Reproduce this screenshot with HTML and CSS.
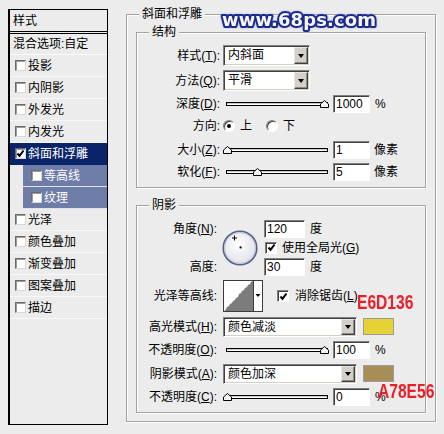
FILE: index.html
```html
<!DOCTYPE html>
<html lang="zh-CN">
<head>
<meta charset="utf-8">
<title>图层样式 - 斜面和浮雕</title>
<link rel="stylesheet" href="styles.css">
</head>
<body>
<div class="dialog">
  <div class="styles">
    <div class="st-head">样式</div>
    <div class="st-blend">混合选项:自定</div>
    <div class="st-item"><span class="cb"></span>投影</div>
    <div class="st-item"><span class="cb"></span>内阴影</div>
    <div class="st-item"><span class="cb"></span>外发光</div>
    <div class="st-item"><span class="cb"></span>内发光</div>
    <div class="st-item sel"><span class="cb"><svg class="tick" viewBox="0 0 9 9"><path d="M1.5 4.5 L3.5 6.8 L7.5 1.5"/></svg></span>斜面和浮雕</div>
    <div class="st-item sub"><span class="cb"></span>等高线</div>
    <div class="st-item sub"><span class="cb"></span>纹理</div>
    <div class="st-item"><span class="cb"></span>光泽</div>
    <div class="st-item"><span class="cb"></span>颜色叠加</div>
    <div class="st-item"><span class="cb"></span>渐变叠加</div>
    <div class="st-item"><span class="cb"></span>图案叠加</div>
    <div class="st-item"><span class="cb"></span>描边</div>
  </div>

  <fieldset class="grp outer">
    <legend>斜面和浮雕</legend>

    <fieldset class="grp inner">
      <legend>结构</legend>
      <div class="form struct">
        <span class="lbl">样式(<u>T</u>):</span>
        <div class="ctl"><div class="select s-struct"><span class="val">内斜面</span><span class="btn"></span></div></div>

        <span class="lbl">方法(<u>Q</u>):</span>
        <div class="ctl"><div class="select s-struct"><span class="val">平滑</span><span class="btn"></span></div></div>

        <span class="lbl">深度(<u>D</u>):</span>
        <div class="ctl">
          <div class="slider"><span class="track"></span><svg class="thumb" style="left:97px" viewBox="0 0 9 8"><polygon points="0.5,7.5 0.5,4 4.5,0.5 8.5,4 8.5,7.5"/></svg></div>
          <span class="num">1000</span><span class="unit">%</span>
        </div>

        <span class="lbl">方向:</span>
        <div class="ctl"><span class="radio on"></span><span class="rtext">上</span><span class="radio"></span><span class="rtext">下</span></div>

        <span class="lbl">大小(<u>Z</u>):</span>
        <div class="ctl">
          <div class="slider"><span class="track"></span><svg class="thumb" style="left:0px" viewBox="0 0 9 8"><polygon points="0.5,7.5 0.5,4 4.5,0.5 8.5,4 8.5,7.5"/></svg></div>
          <span class="num">1</span><span class="unit px">像素</span>
        </div>

        <span class="lbl">软化(<u>F</u>):</span>
        <div class="ctl">
          <div class="slider"><span class="track"></span><svg class="thumb" style="left:30px" viewBox="0 0 9 8"><polygon points="0.5,7.5 0.5,4 4.5,0.5 8.5,4 8.5,7.5"/></svg></div>
          <span class="num">5</span><span class="unit px">像素</span>
        </div>
      </div>
    </fieldset>

    <fieldset class="grp inner shade">
      <legend>阴影</legend>
      <div class="form shadow">
        <span class="lbl r1">角度(<u>N</u>):</span>
        <svg class="dial" viewBox="0 0 36 36">
          <defs>
            <radialGradient id="dialfill" cx="45%" cy="40%" r="65%">
              <stop offset="0" stop-color="#ffffff"/>
              <stop offset="1" stop-color="#dedee6"/>
            </radialGradient>
          </defs>
          <circle cx="18" cy="18" r="16.8" fill="url(#dialfill)" stroke="#56628a" stroke-width="1.6"/>
          <circle cx="18" cy="18" r="15.4" fill="none" stroke="#b4bacc" stroke-width="0.8"/>
          <path d="M12.5 5.5v5M10 8h5" stroke="#000" stroke-width="1"/>
          <rect x="17.6" y="16.4" width="2" height="2" fill="#000"/>
        </svg>
        <div class="c3 r1"><span class="num w41">120</span><span class="unit">度</span></div>
        <div class="c3 r2"><span class="check"><svg class="tick" viewBox="0 0 9 9"><path d="M1.5 4.5 L3.5 6.8 L7.5 1.5"/></svg></span><span class="ctext">使用全局光(<u>G</u>)</span></div>
        <span class="lbl r3">高度:</span>
        <div class="c3 r3"><span class="num w41">30</span><span class="unit">度</span></div>

        <span class="lbl r4">光泽等高线:</span>
        <div class="ctl r4">
          <svg class="contour" viewBox="0 0 40 32">
            <rect x="0.5" y="0.5" width="39" height="31" fill="#fff" stroke="#3c3c3c"/>
            <polygon points="1.5,31 3,29 4,27 6,26 7,24 9,23 10,21 12,20 13,18 15,17 16,14 18,13 19,11 21,10 22,8 24,7 25,5 27,4 28,2 30,1 30,31" fill="#7c7c7c"/>
            <line x1="30.5" y1="1" x2="30.5" y2="31" stroke="#3c3c3c"/>
            <polygon points="32.5,14 37.5,14 35,17" fill="#000"/>
          </svg>
          <span class="check gap"><svg class="tick" viewBox="0 0 9 9"><path d="M1.5 4.5 L3.5 6.8 L7.5 1.5"/></svg></span><span class="ctext wide">消除锯齿(<u>L</u>)</span>
        </div>

        <span class="lbl r5">高光模式(<u>H</u>):</span>
        <div class="ctl r5"><div class="select s-mode"><span class="val">颜色减淡</span><span class="btn"></span></div><span class="swatch sw-hi"></span></div>

        <span class="lbl r6">不透明度(<u>O</u>):</span>
        <div class="ctl r6">
          <div class="slider"><span class="track"></span><svg class="thumb" style="left:97px" viewBox="0 0 9 8"><polygon points="0.5,7.5 0.5,4 4.5,0.5 8.5,4 8.5,7.5"/></svg></div>
          <span class="num">100</span><span class="unit">%</span>
        </div>

        <span class="lbl r7">阴影模式(<u>A</u>):</span>
        <div class="ctl r7"><div class="select s-mode"><span class="val">颜色加深</span><span class="btn"></span></div><span class="swatch sw-sh"></span></div>

        <span class="lbl r8">不透明度(<u>C</u>):</span>
        <div class="ctl r8">
          <div class="slider"><span class="track"></span><svg class="thumb" style="left:0px" viewBox="0 0 9 8"><polygon points="0.5,7.5 0.5,4 4.5,0.5 8.5,4 8.5,7.5"/></svg></div>
          <span class="num">0</span><span class="unit">%</span>
        </div>
      </div>
    </fieldset>
  </fieldset>
</div>

<svg class="wm" viewBox="0 0 166 32">
  <text x="5" y="22" textLength="154" lengthAdjust="spacing">www.68ps.com</text>
</svg>
<div class="note n1">E6D136</div>
<div class="note n2">A78E56</div>
</body>
</html>
```

FILE: styles.css
```css
* { box-sizing: border-box; }
html, body { margin: 0; padding: 0; }
body {
  width: 444px;
  height: 434px;
  overflow: hidden;
  position: relative;
  background: #ececec;
  color: #000;
  font-family: "Liberation Sans", "Noto Sans CJK SC", sans-serif;
  font-size: 12px;
  line-height: 16px;
}
u { text-decoration: underline; text-underline-offset: 1px; }

.dialog {
  display: flex;
  align-items: flex-start;
  padding: 6px 0 0 8px;
}

/* ---------- style list ---------- */
.styles {
  width: 100px;
  height: 416px;
  margin-top: 3px;
  flex: none;
  border: 1px solid #000;
  border-left-width: 2px;
  background: #ececec;
}
.st-head {
  height: 24px;
  padding: 3px 0 0 3px;
  border-bottom: 3px double #000;
}
.st-blend {
  height: 21px;
  line-height: 20px;
  padding-left: 3px;
  border-bottom: 1px solid #fbfbfb;
}
.st-item {
  height: 22px;
  display: flex;
  align-items: center;
  padding-left: 5px;
  border-bottom: 1px solid #f8f8f8;
  white-space: nowrap;
}
.cb {
  width: 11px;
  height: 11px;
  flex: none;
  margin-right: 2px;
  background: #fff;
  border: 1px solid;
  border-color: #6a6a6a #d8d8d8 #d8d8d8 #6a6a6a;
  box-shadow: inset 1px 1px 0 #9a9a9a;
  display: flex;
  align-items: center;
  justify-content: center;
}
.sel { background: #0a246a; color: #fff; border-bottom-color: #0a246a; }
.sub {
  margin-left: 13px;
  padding-left: 8px;
  background: #6e7ca8;
  color: #fff;
  border-bottom-color: #dfe2ee;
}
.tick { width: 9px; height: 9px; display: block; }
.tick path { fill: none; stroke: #000; stroke-width: 2; }

/* ---------- group boxes ---------- */
.grp {
  margin: 0;
  padding: 0;
  min-width: 0;
  border: 1px solid #a2a2a2;
  box-shadow: inset 1px 1px 0 #fff, 1px 1px 0 #fff;
}
.grp > legend {
  padding: 0 3px;
  height: 16px;
  line-height: 16px;
  background: #ececec;
}
.outer {
  width: 310px;
  margin-left: 18px;
  padding: 2px 9px 8px 9px;
}
.outer > legend { margin-left: 3px; }
.inner {
  width: 290px;
  padding: 4px 0 5px 0;
}
.inner > legend { margin-left: 12px; }
.shade {
  margin-top: 9px;
  padding: 6px 0 5px 0;
}

/* ---------- form grids ---------- */
.form {
  display: grid;
  grid-template-columns: 86px 41px 1fr;
}
.struct { grid-template-rows: 23px 27px 20px 24px 24px 20px; }
.shadow { grid-template-rows: 19px 19px 20px 38px 23px 23px 25px 21px; }
.lbl {
  grid-column: 1;
  align-self: center;
  text-align: right;
  padding-right: 3px;
  white-space: nowrap;
}
.shadow .lbl { padding-right: 6px; }
.ctl {
  grid-column: 2 / -1;
  display: flex;
  align-items: center;
  white-space: nowrap;
}
.c3 {
  grid-column: 3;
  display: flex;
  align-items: center;
  white-space: nowrap;
}
.r1 { grid-row: 1; }
.r2 { grid-row: 2; }
.r3 { grid-row: 3; }
.r4 { grid-row: 4; }
.r5 { grid-row: 5; }
.r6 { grid-row: 6; }
.r7 { grid-row: 7; }
.r8 { grid-row: 8; }

/* ---------- controls ---------- */
.select {
  display: flex;
  height: 21px;
  padding: 1px;
  background: #fff;
  border: 1px solid;
  border-color: #808080 #fff #fff #808080;
  box-shadow: inset 1px 1px 0 #404040, inset -1px -1px 0 #d4d0c8;
}
.s-struct { width: 87px; }
.s-mode { width: 134px; height: 20px; }
.select .val {
  flex: 1;
  padding-left: 3px;
  line-height: 17px;
}
.s-mode .val { line-height: 16px; }
.select .btn {
  width: 14px;
  flex: none;
  display: flex;
  align-items: center;
  justify-content: center;
  background: #d4d0c8;
  border: 1px solid;
  border-color: #e6e6e6 #404040 #404040 #e6e6e6;
  box-shadow: inset -1px -1px 0 #8a8a8a;
}
.select .btn::after {
  content: "";
  border-left: 3px solid transparent;
  border-right: 3px solid transparent;
  border-top: 4px solid #000;
}

.slider {
  position: relative;
  width: 106px;
  height: 10px;
  flex: none;
}
.track {
  display: block;
  height: 4px;
  margin: 3px 1px 0 3px;
  background: #fff;
  border: 1px solid #000;
  box-shadow: inset 0 1px 0 #c8c8c8;
}
.thumb {
  position: absolute;
  top: 1px;
  width: 9px;
  height: 8px;
}
.thumb polygon { fill: #f4f4f4; stroke: #000; stroke-width: 1; }

.num {
  width: 37px;
  height: 18px;
  flex: none;
  margin-left: 4px;
  padding-left: 2px;
  line-height: 16px;
  background: #fff;
  border: 1px solid;
  border-color: #808080 #fff #fff #808080;
  box-shadow: inset 1px 1px 0 #404040;
}
.num.w41 { width: 41px; margin-left: 0; }
.unit { margin-left: 5px; }
.unit.px { margin-left: 4px; }

.radio {
  position: relative;
  width: 12px;
  height: 12px;
  flex: none;
  border-radius: 50%;
  background: #fff;
  border: 1px solid;
  border-color: #808080 #fff #fff #808080;
  box-shadow: inset 1px 1px 0 #404040;
}
.radio.on::after {
  content: "";
  position: absolute;
  left: 3px;
  top: 3px;
  width: 4px;
  height: 4px;
  border-radius: 50%;
  background: #000;
}
.rtext { margin-left: 5px; margin-right: 14px; }

.check {
  width: 12px;
  height: 12px;
  flex: none;
  margin-left: 1px;
  display: flex;
  align-items: center;
  justify-content: center;
  background: #fff;
  border: 1px solid;
  border-color: #808080 #fff #fff #808080;
  box-shadow: inset 1px 1px 0 #404040;
}
.check.gap { margin-left: 14px; }
.ctext { margin-left: 5px; }
.ctext.wide { margin-left: 6px; }

.dial {
  grid-column: 2;
  grid-row: 1 / span 3;
  align-self: center;
  width: 36px;
  height: 36px;
  margin-left: -1px;
}
.contour { width: 40px; height: 32px; flex: none; }

.swatch {
  width: 31px;
  height: 17px;
  flex: none;
  margin-left: 6px;
  border: 1px solid #9c9c9c;
}
.sw-hi { background: #e6d136; }
.sw-sh { background: #a78e56; }

/* ---------- overlays ---------- */
.wm {
  position: absolute;
  left: 217px;
  top: 4px;
  width: 166px;
  height: 32px;
  filter: drop-shadow(0 0 1px #a9b4e6);
}
.wm text {
  font-family: "DejaVu Sans", sans-serif;
  font-weight: bold;
  font-size: 18px;
  fill: #f6f6ff;
  stroke: #1c2a8a;
  stroke-width: 4;
  stroke-linejoin: round;
  paint-order: stroke;
}
.note {
  position: absolute;
  color: #e8202a;
  font-family: "Liberation Sans", sans-serif;
  font-weight: bold;
  font-size: 20px;
  line-height: 20px;
  transform: scaleX(0.78);
  transform-origin: 0 0;
  white-space: nowrap;
}
.n1 { left: 357px; top: 292px; }
.n2 { left: 378px; top: 381px; }
```
